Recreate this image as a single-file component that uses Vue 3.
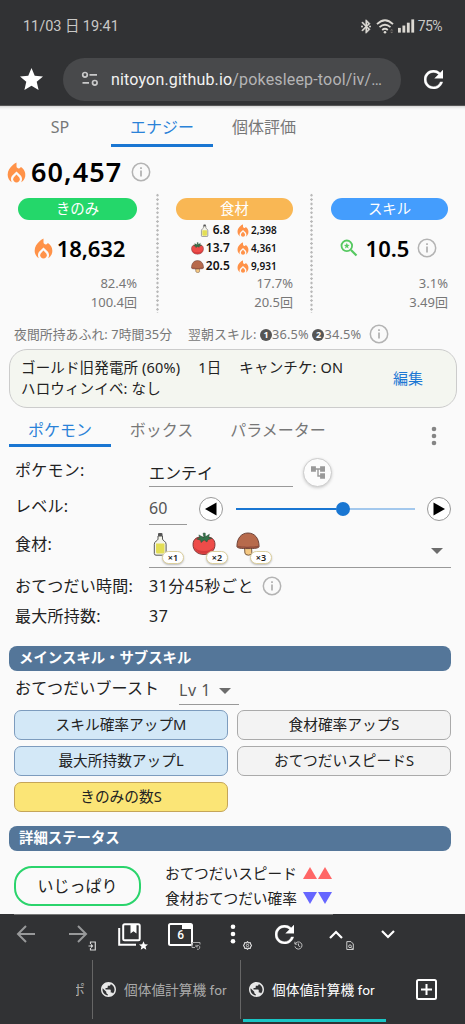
<script setup>
const ingredients = [
  { icon: 'bottle', count: '6.8', energy: '2,398', mult: '×1' },
  { icon: 'tomato', count: '13.7', energy: '4,361', mult: '×2' },
  { icon: 'mushroom', count: '20.5', energy: '9,931', mult: '×3' },
]
const subSkills = [
  { name: 'スキル確率アップM', tone: 'blue' },
  { name: '食材確率アップS', tone: 'plain' },
  { name: '最大所持数アップL', tone: 'blue' },
  { name: 'おてつだいスピードS', tone: 'plain' },
  { name: 'きのみの数S', tone: 'gold' },
]
</script>

<template>
  <div class="phone">
    <svg class="defs" width="0" height="0">
      <symbol id="fire" viewBox="3.5 1.5 17 19">
        <path d="m12 12.9-2.13 2.09c-.56.56-.87 1.29-.87 2.07C9 18.68 10.35 20 12 20s3-1.32 3-2.94c0-.78-.31-1.52-.87-2.07L12 12.9z" />
        <path d="m16 6-.44.55C14.38 8.02 12 7.19 12 5.3V2S4 6 4 13c0 2.92 1.56 5.47 3.89 6.86-.56-.79-.89-1.76-.89-2.8 0-1.32.52-2.56 1.47-3.5L12 10.1l3.53 3.47c.95.93 1.47 2.17 1.47 3.5 0 1.02-.31 1.96-.85 2.75 1.89-1.15 3.29-3.06 3.71-5.3.66-3.55-1.07-6.9-3.86-8.52z" />
      </symbol>
      <symbol id="info" viewBox="0 0 20 20">
        <circle cx="10" cy="10" r="8.7" fill="none" stroke="currentColor" stroke-width="1.5" />
        <path d="M9.1 5.2h1.8v1.9H9.1zM9.1 8.6h1.8v6H9.1z" fill="currentColor" />
      </symbol>
      <symbol id="refresh" viewBox="4 4 16 16">
        <path d="M17.65 6.35C16.2 4.9 14.21 4 12 4c-4.42 0-7.99 3.58-7.99 8s3.57 8 7.99 8c3.73 0 6.84-2.55 7.73-6h-2.08c-.82 2.33-3.04 4-5.65 4-3.31 0-6-2.69-6-6s2.69-6 6-6c1.66 0 3.14.69 4.22 1.78L13 11h7V4l-2.35 2.35z" fill="currentColor" stroke="currentColor" stroke-width=".3" />
      </symbol>
      <symbol id="star" viewBox="2 2 20 19">
        <path d="M12 17.27 18.18 21l-1.64-7.03L22 9.24l-7.19-.61L12 2 9.19 8.63 2 9.24l5.46 4.73L5.82 21z" fill="currentColor" />
      </symbol>
      <symbol id="globe" viewBox="2 2 20 20">
        <path d="M12 2C6.48 2 2 6.48 2 12s4.48 10 10 10 10-4.48 10-10S17.52 2 12 2zm-1 17.93c-3.95-.49-7-3.85-7-7.93 0-.62.08-1.21.21-1.79L9 15v1c0 1.1.9 2 2 2v1.93zm6.9-2.54c-.26-.81-1-1.39-1.9-1.39h-1v-3c0-.55-.45-1-1-1H8v-2h2c.55 0 1-.45 1-1V7h2c1.1 0 2-.9 2-2v-.41c2.93 1.19 5 4.06 5 7.41 0 2.08-.8 3.97-2.1 5.39z" fill="currentColor" />
      </symbol>
      <symbol id="bottle" viewBox="0 0 24 24">
        <rect x="10" y="1" width="4.5" height="3.5" rx="1" fill="#555" />
        <path d="M10 4h4.5v3.2c0 1.3 3.6 2 3.6 5v9.3q0 1.7-1.7 1.7H8q-1.7 0-1.7-1.7v-9.3c0-3 3.7-3.7 3.7-5z" fill="#f4f4ea" stroke="#555" stroke-width="1" />
        <path d="M8 11.5h8.5v8.500q0 1.600-1.500 1.600H9.500Q8 21.600 8 20z" fill="#e3de55" />
      </symbol>
      <symbol id="tomato" viewBox="0 0 24 24">
        <path d="M12 5.5c6-1.600 11 1 11 7 0 6.500-5 10-11 10s-11-3.500-11-10c0-6 5-8.600 11-7z" fill="#ee4c49" stroke="#703030" stroke-width=".9" />
        <path d="M2 15c2 4.500 6 6.500 10 6.500s8-2 10-6.500c-3 3-6 4-10 4s-7-1-10-4z" fill="#d43a3c" />
        <path d="M12 5.800 11 1.200l2.200-.2.200 3.800 4-2.600-.8 3.300 3.200.8-4.200 1.700-.6 2-2.800-1.900L9 10.500l-.3-2.300-4-1.200 3-1.300-.8-2.800z" fill="#33734a" stroke="#284d35" stroke-width=".5" />
      </symbol>
      <symbol id="mushroom" viewBox="0 0 24 24">
        <path d="M8.500 15h7l.4 6q0 2-3.500 2.200Q9 23 8.900 21z" fill="#f5c983" stroke="#6a4b33" stroke-width=".9" />
        <path d="M.9 14.500C.9 6 5.500 1 12 1s11.100 5 11.100 13.500c0 1.700-4.500 2.100-11.100 2.100S.9 16.200.9 14.500z" fill="#b76a4c" stroke="#623a31" stroke-width=".9" />
        <path d="M1.500 13.800c3 1.200 18 1.200 21 0v1.200c-2.500 1.200-18.500 1.200-21 0z" fill="#8d4a3b" />
      </symbol>
    </svg>

    <header class="chrome">
      <div class="status">
        <span class="clock">11/03 日 19:41</span>
        <div class="signals">
          <svg width="10" height="15" viewBox="4 2 15 20"><path d="M17.710 7.710L12 2h-1v7.590L6.410 5 5 6.410 10.590 12 5 17.590 6.410 19 11 14.410V22h1l5.710-5.710-4.300-4.290 4.300-4.290zM13 5.830l1.880 1.880L13 9.590V5.830zm1.880 10.460L13 18.170v-3.760l1.880 1.880z" fill="#dcd9d3" stroke="#dcd9d3" stroke-width=".6" /><circle cx="5.500" cy="12" r="1.500" fill="#dcd9d3" /><circle cx="17.500" cy="12" r="1.500" fill="#dcd9d3" /></svg>
          <svg class="wifi" width="18" height="15" viewBox="0 0 18 15" fill="none" stroke="#dcd9d3" stroke-width="1.800"><path d="M1 5.200Q9-2.700 17 5.200M3.500 8.200q5.500-5 11 0M6.200 11q2.800-2.400 5.600 0" /><circle cx="9" cy="13.200" r="1.300" fill="#dcd9d3" stroke="none" /><path d="M14 11.500l1.700-1.500 1.700 1.500zM14 12.800l1.700 1.500 1.700-1.500z" fill="#77716d" stroke="none" /></svg>
          <svg class="bars" width="17" height="14" viewBox="0 0 18 14" fill="#dcd9d3"><rect y="9" width="3" height="5" /><rect x="4.700" y="6.500" width="3" height="7.500" /><rect x="9.400" y="3.500" width="3" height="10.500" /><rect x="14.100" width="3" height="14" /></svg>
          <span class="battery">75%</span>
        </div>
      </div>
      <div class="address">
        <svg class="fav" width="23" height="22"><use href="#star" /></svg>
        <div class="url">
          <svg width="18" height="16" viewBox="0 0 18 16" fill="none" stroke="#c9c9ca" stroke-width="1.700"><circle cx="4" cy="3.800" r="2.300" /><path d="M8.500 3.800H16M1.500 11.800H8" /><circle cx="13.800" cy="11.800" r="2.300" /></svg>
          <span class="url-text"><b>nitoyon.github.io</b>/pokesleep-tool/iv/…</span>
        </div>
        <svg class="reload" width="19" height="19"><use href="#refresh" /></svg>
      </div>
    </header>

    <main class="page">
      <nav class="tabs top-tabs">
        <span>SP</span><span class="active">エナジー</span><span>個体評価</span>
      </nav>

      <div class="total">
        <svg class="fire" width="19" height="21"><use href="#fire" /></svg>
        <strong>60,457</strong>
        <svg class="info" width="20" height="20"><use href="#info" /></svg>
      </div>

      <section class="stats">
        <div class="stat">
          <div class="pill green">きのみ</div>
          <div class="value berry">
            <svg class="fire" width="19" height="21"><use href="#fire" /></svg>
            <strong>18,632</strong>
          </div>
          <div class="share">82.4%</div>
          <div class="share">100.4回</div>
        </div>
        <div class="stat middle">
          <div class="pill orange">食材</div>
          <div class="foods">
            <div v-for="i in ingredients" :key="i.icon" class="food">
              <span class="amount"><svg width="13" height="13"><use :href="'#' + i.icon" /></svg>{{ i.count }}</span>
              <svg class="fire" width="12" height="13"><use href="#fire" /></svg>
              <span class="energy">{{ i.energy }}</span>
            </div>
          </div>
          <div class="share">17.7%</div>
          <div class="share">20.5回</div>
        </div>
        <div class="stat">
          <div class="pill azure">スキル</div>
          <div class="value">
            <svg width="18" height="18" viewBox="0 0 18 18" fill="none" stroke="#55c860"><circle cx="6.800" cy="6.800" r="5.300" stroke-width="1.800" /><path d="m11 11 5.500 5.500" stroke-width="2.200" /><path d="m6.800 3.800.8 2 2.100.1-1.700 1.400.6 2.100-1.800-1.200L5 9.400l.6-2.100-1.700-1.400 2.100-.1z" fill="#55c860" stroke="none" /></svg>
            <strong class="skill-count">10.5</strong>
            <svg class="info" width="20" height="20"><use href="#info" /></svg>
          </div>
          <div class="share">3.1%</div>
          <div class="share">3.49回</div>
        </div>
      </section>

      <div class="night">
        <span class="overflow">夜間所持あふれ: 7時間35分</span>
        <span class="morning">翌朝スキル: <i>1</i>36.5% <i>2</i>34.5%</span>
        <svg class="info" width="20" height="20"><use href="#info" /></svg>
      </div>

      <section class="settings">
        <div class="conditions">
          <div><span>ゴールド旧発電所 (60%)</span><span>1日</span><span>キャンチケ: ON</span></div>
          <div>ハロウィンイベ: なし</div>
        </div>
        <span class="edit">編集</span>
      </section>

      <nav class="tabs sub-tabs">
        <span class="active">ポケモン</span><span>ボックス</span><span>パラメーター</span>
        <svg class="kebab" width="6" height="20" viewBox="0 0 6 20" fill="#858585"><circle cx="3" cy="3" r="2.300" /><circle cx="3" cy="10" r="2.300" /><circle cx="3" cy="17" r="2.300" /></svg>
      </nav>

      <section class="form">
        <div class="row r-name">
          <label>ポケモン:</label>
          <div class="input name">エンテイ</div>
          <div class="evolve"><svg width="14" height="13" viewBox="2 3 20 18"><path d="M22 11V3h-7v3H9V3H2v8h7V8h2v10h4v3h7v-8h-7v3h-2V8h2v3z" fill="#999" /></svg></div>
        </div>
        <div class="row r-level">
          <label>レベル:</label>
          <div class="input level">60</div>
          <div class="step"><svg width="12" height="14" viewBox="0 0 12 14"><path d="M0 7 11.500.5v13z" /></svg></div>
          <div class="slider"><div class="filled"></div><div class="thumb"></div></div>
          <div class="step"><svg width="12" height="14" viewBox="0 0 12 14"><path d="M12 7 .5.500v13z" /></svg></div>
        </div>
        <div class="row r-food">
          <label>食材:</label>
          <div class="input food-select">
            <div v-for="i in ingredients" :key="i.icon" class="slot">
              <svg width="24" height="24"><use :href="'#' + i.icon" /></svg>
              <span class="mult">{{ i.mult }}</span>
            </div>
            <i class="caret"></i>
          </div>
        </div>
        <div class="row r-time">
          <label>おてつだい時間:</label>
          <span class="duration">31分45秒ごと</span>
          <svg class="info" width="20" height="20"><use href="#info" /></svg>
        </div>
        <div class="row r-max">
          <label>最大所持数:</label>
          <span class="duration">37</span>
        </div>
      </section>

      <h2 class="heading">メインスキル・サブスキル</h2>
      <div class="main-skill">
        <span>おてつだいブースト</span>
        <div class="input lv">Lv 1<i class="caret"></i></div>
      </div>
      <div class="sub-skills">
        <div v-for="s in subSkills" :key="s.name" class="skill" :class="s.tone">{{ s.name }}</div>
      </div>

      <h2 class="heading">詳細ステータス</h2>
      <div class="nature">
        <div class="nature-name">いじっぱり</div>
        <div class="effects">
          <div>おてつだいスピード<i class="up"></i><i class="up"></i></div>
          <div>食材おてつだい確率<i class="down"></i><i class="down"></i></div>
        </div>
      </div>
    </main>

    <footer class="bottom">
      <div class="progress"></div>
      <div class="tools">
        <div class="tool dim">
          <svg width="20" height="18" viewBox="0 0 20 18" fill="none" stroke="currentColor" stroke-width="2"><path d="M19 9H2M10 1 2 9l8 8" /></svg>
        </div>
        <div class="tool dim">
          <svg width="20" height="18" viewBox="0 0 20 18" fill="none" stroke="currentColor" stroke-width="2"><path d="M1 9h17M10 1l8 8-8 8" /></svg>
          <svg class="mini" width="8" height="10" viewBox="0 0 8 10" fill="none" stroke="#d5d5d5"><path d="M2.500 3V1h4.800v8H2.500V7M.5 5h4M3 3.500 4.500 5 3 6.500" stroke-width="1.200" /></svg>
        </div>
        <div class="tool">
          <svg width="23" height="23" viewBox="0 0 23 23" fill="none" stroke="currentColor" stroke-width="2"><rect x="5.200" y="1.200" width="16.500" height="16" rx="1.500" /><path d="M1.200 5v16.800H18" /><path d="M12.500 1.500h6v9l-3-2.300-3 2.300z" fill="currentColor" stroke="none" /></svg>
          <svg class="mini" width="9" height="9"><use href="#star" /></svg>
        </div>
        <div class="tool">
          <svg width="25" height="23" viewBox="0 0 25 23" fill="none" stroke="currentColor" stroke-width="2"><rect x="1" y="1" width="23" height="21" rx="1.500" /><path d="M14 1h10v5H14z" fill="currentColor" stroke="none" /></svg>
          <span class="tab-count">6</span>
          <svg class="mini" width="10" height="9" viewBox="0 0 10 9" fill="none" stroke="#aaa"><path d="M4 6.500H1v-5h8v2M5 5.500a2 2 0 1 1 1 2.700M5 3.800v2h2" /></svg>
        </div>
        <div class="tool">
          <svg width="6" height="20" viewBox="0 0 6 20" fill="currentColor"><circle cx="3" cy="2.800" r="2.300" /><circle cx="3" cy="10" r="2.300" /><circle cx="3" cy="17.200" r="2.300" /></svg>
          <svg class="mini" width="9" height="9" viewBox="0 0 10 10" fill="none" stroke="#ddd"><path d="M5 .7 6.200 2l1.800-.3.500 1.800L9.500 5l-1 1.500L8 8.300 6.200 8 5 9.300 3.800 8 2 8.300l-.5-1.800L.5 5l1-1.500L2 1.700 3.800 2z" stroke-width="1.200" /><circle cx="5" cy="5" r="1.300" /></svg>
        </div>
        <div class="tool">
          <svg width="19" height="19"><use href="#refresh" /></svg>
          <svg class="mini" width="9" height="9" viewBox="0 0 10 10" fill="none" stroke="#ccc"><path d="M1.300 3.200A4 4 0 1 1 1 6M1 .8v2.700h2.700M5 2.800V5.300l2 1.200" /></svg>
        </div>
        <div class="tool">
          <svg width="14" height="9" viewBox="0 0 14 9" fill="none" stroke="currentColor" stroke-width="2.200"><path d="M1 8l6-6 6 6" /></svg>
          <svg class="mini" width="8" height="9" viewBox="0 0 8 9" fill="none" stroke="#ccc"><path d="M.8.600h4.200L7.300 3v5.500H.8z" /><circle cx="4" cy="5.300" r="1.400" /><path d="m5 6.300 2 2" /></svg>
        </div>
        <div class="tool">
          <svg width="14" height="9" viewBox="0 0 14 9" fill="none" stroke="currentColor" stroke-width="2.200"><path d="M1 1l6 6 6-6" /></svg>
        </div>
      </div>
      <div class="browser-tabs">
        <div class="btab cut"><span>ポ</span></div>
        <div class="btab"><svg width="15" height="15"><use href="#globe" /></svg><span>個体値計算機 for</span></div>
        <div class="btab current"><svg width="15" height="15"><use href="#globe" /></svg><span>個体値計算機 for</span></div>
        <div class="new-tab"><svg width="21" height="21" viewBox="0 0 21 21" fill="none" stroke="#fff" stroke-width="2"><rect x="1" y="1" width="19" height="19" rx="1.500" /><path d="M10.500 5v11M5 10.500h11" /></svg></div>
      </div>
    </footer>
  </div>
</template>

<style>
body { background: #fafafa; }
</style>

<style scoped>
.phone { width: 465px; height: 1024px; display: flex; flex-direction: column; overflow: hidden; background: #fafafa; color: #222; font-family: "Noto Sans", "Noto Sans CJK JP", sans-serif; font-size: 16px; line-height: 20px; white-space: nowrap; box-sizing: border-box; }
.phone *, .phone *::after { box-sizing: border-box; }
svg { display: block; flex: none; }
.defs { position: absolute; }
i { font-style: normal; }

.chrome { flex: none; height: 106px; background: #313234; border-bottom: 1px solid #555; font-family: Roboto, "Noto Sans CJK JP", sans-serif; }
.status { display: flex; height: 52px; padding: 0 23px 0 23px; justify-content: space-between; align-items: center; color: #c9c8c6; }
.clock { font-size: 14.500px; letter-spacing: -.05px; padding-top: 2px; }
.signals { display: flex; align-items: center; }
.wifi { margin-left: 5px; }
.bars { margin-left: 4px; }
.battery { font-size: 14px; margin-left: 3px; letter-spacing: -.6px; }
.address { display: flex; align-items: center; height: 44px; margin-top: 5px; padding-left: 20px; color: #fff; }
.url { display: flex; align-items: center; width: 338px; height: 43px; margin: 0 22px 0 20px; padding-left: 18px; border-radius: 22px; background: #48494b; }
.reload { margin-left: 1px; }
.url-text { margin-left: 12px; padding-top: 2px; font-size: 16px; letter-spacing: .17px; color: #b4b4b5; }
.url-text b { font-weight: 400; color: #f2f2f2; }

.page { flex: none; height: 808px; overflow: hidden; box-shadow: inset 0 4px 3px -3px #ccc; }
.tabs { display: flex; color: #777; }
.tabs span { height: 41px; line-height: 42px; text-align: center; }
.tabs .active { color: #2a82d8; border-bottom: 3px solid #1976d2; }
.top-tabs { padding-left: 9px; }
.top-tabs span { width: 102px; }
.info { color: #b3b3b3; }
.fire { fill: #ff9248; }

.total { display: flex; align-items: center; height: 46px; margin-top: 2px; padding-left: 7px; color: #000; }
.total strong { width: 92px; margin-left: 5px; font-size: 27px; font-weight: 600; letter-spacing: 1.1px; }
.total .info { margin-left: 8px; }

.stats { display: flex; height: 120px; margin-left: 18px; margin-top: -2px; }
.stat { width: 119px; padding-top: 5px; }
.stat.middle { width: 157px; margin-left: 19px; padding-left: 20px; padding-right: 20px; background-image: radial-gradient(circle, #b9b9b9 1px, transparent 1.400px), radial-gradient(circle, #b9b9b9 1px, transparent 1.400px); background-size: 3px 4.400px; background-position: 0 0, 100% 0; background-repeat: repeat-y; }
.stat:last-child { width: 117px; margin-left: 18px; }
.pill { height: 22px; line-height: 22px; border-radius: 11px; color: #fff; text-align: center; font-size: 14.400px; }
.green { background: #24d76a; }
.orange { background: #f9b754; }
.azure { background: #449dfd; }
.value { display: flex; align-items: center; justify-content: center; height: 54px; padding-top: 2px; color: #000; }
.value strong { margin-left: 5px; font-size: 22px; font-weight: 600; }
.berry { padding-left: 4px; }
.berry strong { margin-left: 4px; letter-spacing: -.1px; }
.value .skill-count { margin: 0 8px; }
.value .info { margin-right: 2px; }
.share { height: 19px; line-height: 19px; text-align: right; font-size: 13px; color: #777; }
.foods { height: 54px; padding-top: 1px; color: #111; font-weight: 600; }
.food { display: flex; align-items: center; height: 18px; }
.amount { display: flex; align-items: center; justify-content: flex-end; gap: 2px; width: 54px; margin-right: 7px; font-size: 12px; letter-spacing: .1px; }
.energy { margin-left: 2px; font-size: 10px; }

.night { display: flex; align-items: center; height: 41px; padding-left: 14px; font-size: 12.800px; letter-spacing: .1px; color: #777; }
.overflow { width: 174px; }
.morning { letter-spacing: .18px; }
.morning i { display: inline-block; width: 12px; height: 12px; border-radius: 6px; background: #555; color: #fff; font-size: 9px; line-height: 12px; text-align: center; font-weight: 700; vertical-align: 1px; letter-spacing: 0; }
.night .info { margin-left: 8px; }

.settings { display: flex; align-items: center; width: 448px; height: 59px; margin: -5px 0 0 9px; border: 1px solid #ccc; border-radius: 18px; background: #f4f6f0; padding-left: 11px; }
.conditions { width: 372px; font-size: 14.500px; line-height: 21px; letter-spacing: .15px; padding-bottom: 1px; }
.conditions span { margin-right: 18px; }
.edit { color: #1c78d4; font-size: 15px; padding-bottom: 2px; }

.sub-tabs { margin: 6px 0 0 9px; height: 33px; }
.sub-tabs span { width: 102px; height: 33px; line-height: 32px; }
.sub-tabs span:nth-child(2) { width: 101px; }
.sub-tabs span:nth-child(3) { width: 132px; }
.kebab { margin: 12px 0 0 87px; }

.form { padding-left: 15px; }
.row { display: flex; align-items: center; }
.row label { width: 134px; letter-spacing: .25px; }
.input { border-bottom: 1px solid #999; }
.r-name { height: 40px; margin-top: 6px; align-items: flex-start; padding-top: 3px; }
.r-name label { padding-top: 4px; }
.name { width: 144px; height: 31px; line-height: 35px; }
.evolve { display: flex; align-items: center; justify-content: center; width: 29px; height: 29px; margin: 2px 0 0 10px; border: 1px solid #ccc; border-radius: 50%; box-shadow: 0 1px 3px #ccc; background: #fcfcfc; }
.r-level { height: 32px; }
.r-level label { padding-bottom: 7px; }
.level { width: 38px; height: 32px; line-height: 31px; color: #555; margin-right: 12px; }
.step { display: flex; align-items: center; justify-content: center; width: 24px; height: 24px; border: 1px solid #999; border-radius: 50%; background: #fff; }
.slider { display: flex; align-items: center; width: 179px; height: 2px; margin: 0 12px 0 13px; background: #a3c8ed; }
.filled { width: 100px; height: 2px; background: #1976d2; }
.thumb { width: 14px; height: 14px; border-radius: 50%; background: #1976d2; flex: none; }
.r-food { height: 42px; margin-top: 1px; }
.r-food label { padding-bottom: 6px; }
.food-select { display: flex; width: 302px; height: 42px; padding-top: 6px; }
.slot { position: relative; width: 44px; }
.slot svg { margin-left: -1px; }
.mult { position: absolute; left: 13px; top: 19px; width: 22px; height: 13px; border: 1px solid #dccf9d; border-radius: 7px; background: #fff; box-shadow: 0 1px 2px #bbb; text-align: center; font-size: 9px; line-height: 11px; font-weight: 600; }
.caret { display: inline-block; border: 6px solid transparent; border-top: 6px solid #6c6c6c; border-bottom: 0; }
.food-select .caret { margin: 16px 0 0 150px; align-self: flex-start; }
.r-time { height: 32px; margin-top: 2px; }
.duration { letter-spacing: .55px; }
.r-time .info { margin-left: 8px; }
.r-max { height: 28px; }

.heading { width: 442px; height: 25px; margin: 16px 0 0 9px; padding-left: 10px; border-radius: 8px; background: #547699; color: #fff; font-size: 14.400px; font-weight: 700; line-height: 24px; }
.main-skill { display: flex; height: 34px; padding-left: 15px; line-height: 34px; }
.main-skill span { width: 164px; letter-spacing: .15px; }
.lv { width: 60px; height: 34px; line-height: 39px; color: #555; letter-spacing: .5px; }
.lv .caret { margin: 0 0 2px 8px; }
.sub-skills { display: grid; grid-template-columns: 214px 214px; gap: 6px 9px; margin: 5px 0 0 14px; }
.skill { height: 30px; line-height: 27px; text-align: center; border: 1px solid #aaa; border-radius: 7px; font-size: 14.700px; background: #f3f3f3; }
.skill.blue { background: #d3e8f7; border-color: #7d9cbe; }
.skill.gold { background: #fbe576; border-color: #c5a559; }
.sub-skills + .heading { margin-top: 14px; }
.nature { display: flex; padding: 10px 0 0 14px; }
.nature-name { width: 127px; height: 40px; margin-top: 5px; border: 2px solid #2bd46c; border-radius: 18px; text-align: center; line-height: 36px; }
.effects { margin-left: 24px; font-size: 14.700px; line-height: 25px; }
.effects i { display: inline-block; border: 7px solid transparent; margin-right: 1px; }
.effects i:first-of-type { margin-left: 6px; }
.up { border-top: 0 !important; border-bottom: 12px solid #ff6666 !important; }
.down { border-bottom: 0 !important; border-top: 12px solid #6666ff !important; }

.bottom { flex: none; height: 110px; background: #313234; color: #fff; }
.progress { width: 319px; height: 1px; margin-left: 14px; background: #777; }
.tools { display: grid; grid-template-columns: repeat(8, 51.700px); height: 40px; margin-top: -1px; }
.tool { position: relative; display: flex; align-items: center; justify-content: center; }
.dim { color: #98999a; }
.mini { position: absolute; left: 36px; top: 27px; }
.tab-count { position: absolute; left: 0; width: 51px; top: 11px; text-align: center; font-family: Roboto, sans-serif; font-size: 12px; font-weight: 500; }
.browser-tabs { display: flex; height: 59px; margin-top: 6px; font-family: Roboto, "Noto Sans CJK JP", sans-serif; font-size: 13.700px; color: #aaa; }
.btab { display: flex; align-items: center; gap: 8px; width: 148px; padding-left: 8px; border-right: 1px solid #666; }
.btab svg { color: #e8e8e8; }
.cut { width: 93px; padding-left: 76px; }
.cut span { display: flex; justify-content: flex-end; width: 9px; overflow: hidden; }
.current { width: 143px; height: 62px; margin-left: 2px; padding-left: 6px; border-right: 0; border-bottom: 3px solid #19c5c5; color: #fff; }
.new-tab { display: flex; align-items: center; margin-left: 30px; }
</style>
